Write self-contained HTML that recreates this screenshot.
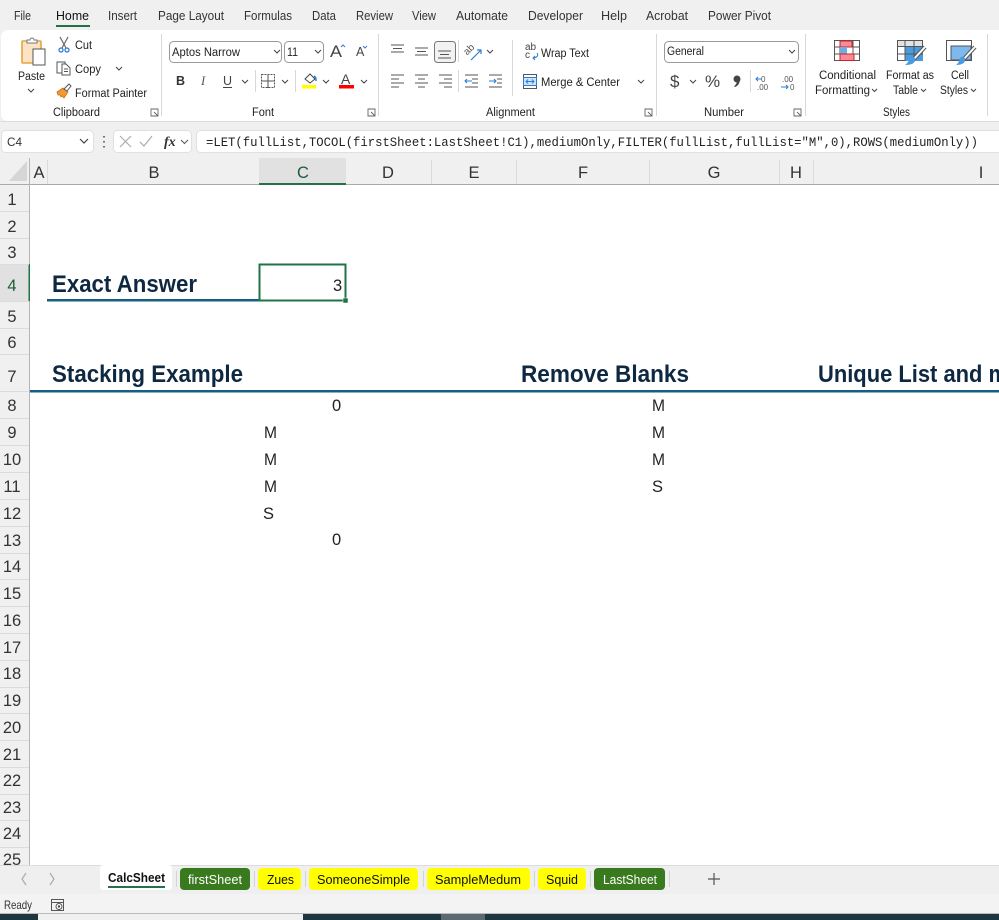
<!DOCTYPE html>
<html><head><meta charset="utf-8"><style>
html,body{margin:0;padding:0;background:#fff;overflow:hidden}
svg{display:block}
text{font-family:"Liberation Sans",sans-serif;fill:#222;font-size:11.5px}
.t{font-size:12.5px;fill:#333}
.h{font-size:16.5px;fill:#333;text-anchor:middle}
.r{font-size:16.5px;fill:#333;text-anchor:middle}
.g{font-size:16.5px;fill:#222}
.b{font-size:24px;font-weight:bold;fill:#0e2841}
.tab{font-size:13px;fill:#111}
.l{fill:none;stroke:#555;stroke-width:1}
.c{fill:none;stroke:#444;stroke-width:1}
</style></head><body>
<svg width="999" height="920" viewBox="0 0 999 920" xmlns="http://www.w3.org/2000/svg">
<rect width="999" height="920" fill="#fff"/>
<rect width="999" height="185" fill="#f0f0f0"/>
<!-- menu -->
<text class="t" x="14" y="20" textLength="17" lengthAdjust="spacingAndGlyphs">File</text>
<text class="t" x="56" y="20" textLength="33" lengthAdjust="spacingAndGlyphs" style="fill:#111">Home</text>
<rect x="56" y="25" width="34" height="2" fill="#217346"/>
<text class="t" x="108" y="20" textLength="29" lengthAdjust="spacingAndGlyphs">Insert</text>
<text class="t" x="158" y="20" textLength="66" lengthAdjust="spacingAndGlyphs">Page Layout</text>
<text class="t" x="244" y="20" textLength="48" lengthAdjust="spacingAndGlyphs">Formulas</text>
<text class="t" x="312" y="20" textLength="24" lengthAdjust="spacingAndGlyphs">Data</text>
<text class="t" x="356" y="20" textLength="37" lengthAdjust="spacingAndGlyphs">Review</text>
<text class="t" x="412" y="20" textLength="24" lengthAdjust="spacingAndGlyphs">View</text>
<text class="t" x="456" y="20" textLength="52" lengthAdjust="spacingAndGlyphs">Automate</text>
<text class="t" x="528" y="20" textLength="55" lengthAdjust="spacingAndGlyphs">Developer</text>
<text class="t" x="601" y="20" textLength="26" lengthAdjust="spacingAndGlyphs">Help</text>
<text class="t" x="646" y="20" textLength="42" lengthAdjust="spacingAndGlyphs">Acrobat</text>
<text class="t" x="708" y="20" textLength="63" lengthAdjust="spacingAndGlyphs">Power Pivot</text>
<!-- ribbon -->
<rect x="1" y="30" width="1010" height="91" rx="7" fill="#fff"/>
<rect x="0" y="121" width="999" height="1" fill="#dcdcdc"/>
<g fill="#d8d8d8">
<rect x="161" y="34" width="1" height="82"/><rect x="378" y="34" width="1" height="82"/>
<rect x="656" y="34" width="1" height="82"/><rect x="805" y="34" width="1" height="82"/>
<rect x="987" y="34" width="1" height="82"/><rect x="512" y="40" width="1" height="56"/>
<rect x="255" y="70" width="1" height="22"/><rect x="295" y="70" width="1" height="22"/>
<rect x="458" y="40" width="1" height="22"/><rect x="458" y="70" width="1" height="22"/>
<rect x="750" y="70" width="1" height="22"/>
</g>
<!-- paste -->
<rect x="22" y="41" width="19" height="22" rx="1" fill="#fbe3c4" stroke="#e8a33d" stroke-width="1.6"/>
<path d="M27 43v-3h3a2 2 0 0 1 4 0h3v3z" fill="#fff" stroke="#777"/>
<rect x="33" y="49" width="12" height="16" fill="#fff" stroke="#555"/>
<text x="18" y="80" textLength="27" lengthAdjust="spacingAndGlyphs">Paste</text>
<path class="c" d="M28 89l3 3 3-3"/>
<!-- cut -->
<path d="M60 37l6 11M68 37l-6 11" stroke="#666" fill="none" stroke-width="1.2"/>
<circle cx="61" cy="50" r="2" fill="none" stroke="#2b7cd3" stroke-width="1.3"/><circle cx="67" cy="50" r="2" fill="none" stroke="#2b7cd3" stroke-width="1.3"/>
<text x="75" y="49" textLength="17" lengthAdjust="spacingAndGlyphs">Cut</text>
<!-- copy -->
<rect x="57" y="62" width="8" height="11" fill="#fff" stroke="#555"/>
<path d="M62 64h4l4 4v7h-8z" fill="#fff" stroke="#555"/><path d="M64 69h4M64 71.500h4" stroke="#555"/>
<text x="75" y="73" textLength="26" lengthAdjust="spacingAndGlyphs">Copy</text>
<path class="c" d="M116 67l3 3 3-3"/>
<!-- painter -->
<path d="M57 92l6-4 5 4-4 6-2-2-1 1-1-2-2 0z" fill="#f09a37" stroke="#c96f10" stroke-width=".8"/>
<path d="M64 89l5-5 2 2-4 5z" fill="#fff" stroke="#555"/>
<text x="75" y="97" textLength="72" lengthAdjust="spacingAndGlyphs">Format Painter</text>
<text x="53" y="116" textLength="47" lengthAdjust="spacingAndGlyphs" style="font-size:11.500px">Clipboard</text>
<path d="M151 109h7v7h-7zM154 112l4 4" fill="none" stroke="#666" stroke-width=".9"/>
<!-- font -->
<rect x="169.500" y="41.500" width="112" height="21" rx="4" fill="#fff" stroke="#999"/>
<text x="172" y="56" textLength="68" lengthAdjust="spacingAndGlyphs">Aptos Narrow</text>
<path class="c" d="M274 50l3 3 3-3"/>
<rect x="284.500" y="41.500" width="39" height="21" rx="4" fill="#fff" stroke="#999"/>
<text x="287" y="56" textLength="11" lengthAdjust="spacingAndGlyphs">11</text>
<path class="c" d="M315 50l3 3 3-3"/>
<text x="330" y="57" textLength="12" lengthAdjust="spacingAndGlyphs" style="font-size:16.500px;fill:#444">A</text><path d="M341 47l2-2 2 2" fill="none" stroke="#2b7cd3"/>
<text x="356" y="56" style="font-size:12.500px;fill:#444">A</text><path d="M363 46l2 2 2-2" fill="none" stroke="#2b7cd3"/>
<text x="176" y="85" style="font-size:12.500px;font-weight:bold;fill:#333">B</text>
<text x="201" y="85" style="font-size:12.500px;font-style:italic;font-family:'Liberation Serif',serif;fill:#555">I</text>
<text x="223" y="85" style="font-size:12.500px;fill:#444">U</text><rect x="223" y="87" width="9" height="1" fill="#444"/>
<path class="c" d="M242 80l3 3 3-3M282 80l3 3 3-3M323 80l3 3 3-3M361 80l3 3 3-3"/>
<rect x="261.500" y="74.500" width="13" height="13" fill="none" stroke="#555" stroke-dasharray="2 1"/><path d="M268 74v14M261 81h14" stroke="#555"/>
<path d="M305 79l5-5 5 5-5 4z" fill="#fff" stroke="#444"/><path d="M314 76c2 1 2 3 2 5" stroke="#2b7cd3" fill="none" stroke-width="1.500"/>
<rect x="302" y="85" width="14" height="3.500" fill="#ffff00"/>
<text x="341" y="84" style="font-size:14px;fill:#444">A</text>
<rect x="339" y="85" width="15" height="3.500" fill="#f00"/>
<text x="252" y="116" textLength="22" lengthAdjust="spacingAndGlyphs" style="font-size:11.500px">Font</text>
<path d="M368 109h7v7h-7zM371 112l4 4" fill="none" stroke="#666" stroke-width=".9"/>
<!-- alignment -->
<rect x="434.500" y="41.500" width="21" height="21" rx="3" fill="#f2f2f2" stroke="#777"/>
<path class="l" d="M391 45h13M393 48.500h9M391 52h13M415 48h13M417 51.500h9M415 55h13M438 51h13M440 54.500h9M438 58h13"/>
<path class="l" d="M391 75h13M391 79h8M391 83h13M391 87h8M415 75h13M418 79h7M415 83h13M418 87h7M439 75h13M444 79h8M439 83h13M444 87h8"/>
<path d="M472 81h-7m2-2l-2 2 2 2" stroke="#2b7cd3" fill="none"/><path class="l" d="M465 75h13M472 79h6M472 83h6M465 87h13"/>
<path d="M489 81h7m-2-2l2 2-2 2" stroke="#2b7cd3" fill="none"/><path class="l" d="M489 75h13M497 79h5M497 83h5M489 87h13"/>
<text x="464" y="52" transform="rotate(-45 470 50)" style="font-size:10px;fill:#555">ab</text>
<path d="M471 60l10-10m-4 0h4v4" stroke="#2b7cd3" fill="none" stroke-width="1.200"/>
<path class="c" d="M487 50l3 3 3-3M638 80l3 3 3-3"/>
<text x="525" y="50" style="font-size:10px;fill:#444">ab</text><text x="525" y="58" style="font-size:10px;fill:#444">c</text>
<path d="M537 53c2 3-1 5-4 5m2-2l-2 2 2 2" stroke="#2b7cd3" fill="none"/>
<text x="541" y="57" textLength="48" lengthAdjust="spacingAndGlyphs">Wrap Text</text>
<rect x="523.500" y="74.500" width="13" height="14" fill="#fff" stroke="#555"/><rect x="523.500" y="77.500" width="13" height="8" fill="#cfe4f7" stroke="#2b7cd3"/>
<path d="M526 81.500h8m-6-2l-2 2 2 2m4-4l2 2-2 2" stroke="#2b7cd3" fill="none" stroke-width=".9"/>
<text x="541" y="86" textLength="79" lengthAdjust="spacingAndGlyphs">Merge &amp; Center</text>
<text x="486" y="116" textLength="49" lengthAdjust="spacingAndGlyphs" style="font-size:11.500px">Alignment</text>
<path d="M645 109h7v7h-7zM648 112l4 4" fill="none" stroke="#666" stroke-width=".9"/>
<!-- number -->
<rect x="664.500" y="41.500" width="134" height="21" rx="4" fill="#fff" stroke="#999"/>
<text x="667" y="55" textLength="37" lengthAdjust="spacingAndGlyphs">General</text>
<path class="c" d="M789 50l3 3 3-3M690 80l3 3 3-3"/>
<text x="670" y="87" style="font-size:17px;fill:#444">$</text>
<text x="705" y="87" style="font-size:17px;fill:#444">%</text>
<circle cx="737" cy="79" r="3.500" fill="#444"/><path d="M740 79c0 4-2 7-5 8l-1-1c2-1 3-3 3-6z" fill="#444"/>
<text x="761" y="82" style="font-size:8px;fill:#555">0</text><text x="757" y="90" style="font-size:8px;fill:#555">.00</text>
<path d="M762 79h-6m2-2l-2 2 2 2" stroke="#2b7cd3" fill="none"/>
<text x="782" y="82" style="font-size:8px;fill:#555">.00</text><text x="790" y="90" style="font-size:8px;fill:#555">0</text>
<path d="M781 87h7m-2-2l2 2-2 2" stroke="#2b7cd3" fill="none"/>
<text x="704" y="116" textLength="40" lengthAdjust="spacingAndGlyphs" style="font-size:11.500px">Number</text>
<path d="M794 109h7v7h-7zM797 112l4 4" fill="none" stroke="#666" stroke-width=".9"/>
<!-- styles -->
<rect x="834.500" y="40.500" width="25" height="20" fill="#fff" stroke="#555"/>
<path d="M840 41v20M853 41v20M834 47h25M834 54h25" stroke="#555"/>
<rect x="840" y="41" width="12" height="6" fill="#f78b98" stroke="#c22"/>
<rect x="840" y="47" width="7" height="7" fill="#6caee6"/>
<rect x="840" y="54" width="14" height="6.500" fill="#f78b98" stroke="#c22"/>
<text x="819" y="79" textLength="57" lengthAdjust="spacingAndGlyphs">Conditional</text>
<text x="815" y="94" textLength="55" lengthAdjust="spacingAndGlyphs">Formatting</text>
<path class="c" d="M872 89l2.500 2.500 2.500-2.500"/>
<rect x="897.500" y="40.500" width="25" height="20" fill="#fff" stroke="#555"/>
<rect x="897.500" y="40.500" width="25" height="6" fill="#e3e3e3" stroke="#555"/>
<rect x="905" y="47" width="18" height="14" fill="#4a9ae0"/>
<path d="M905 41v20M914 41v20M897 54h26" stroke="#555"/>
<path d="M925 47l-12 13" stroke="#555" stroke-width="4"/><path d="M925 47l-12 13" stroke="#fff" stroke-width="2"/>
<path d="M911 57c3-1 5 1 4 4-1 3-5 4-10 4 3-2 4-5 6-8z" fill="#4a9ae0"/>
<text x="886" y="79" textLength="48" lengthAdjust="spacingAndGlyphs">Format as</text>
<text x="893" y="94" textLength="25" lengthAdjust="spacingAndGlyphs">Table</text>
<path class="c" d="M921 89l2.500 2.500 2.500-2.500"/>
<rect x="946.500" y="40.500" width="25" height="20" fill="#fff" stroke="#555"/>
<rect x="951" y="46" width="20" height="14" fill="#7db8ee" stroke="#555"/>
<path d="M975 47l-12 13" stroke="#555" stroke-width="4"/><path d="M975 47l-12 13" stroke="#fff" stroke-width="2"/>
<path d="M961 57c3-1 5 1 4 4-1 3-5 4-9 4 3-2 3-5 5-8z" fill="#4a9ae0"/>
<text x="951" y="79" textLength="18" lengthAdjust="spacingAndGlyphs">Cell</text>
<text x="940" y="94" textLength="28" lengthAdjust="spacingAndGlyphs">Styles</text>
<path class="c" d="M971 89l2.500 2.500 2.500-2.500"/>
<text x="883" y="116" textLength="27" lengthAdjust="spacingAndGlyphs" style="font-size:11.500px">Styles</text>
<!-- formula bar -->
<rect x="1.500" y="130.500" width="92" height="22" rx="4" fill="#fff" stroke="#e0e0e0"/>
<text x="7" y="146" textLength="15" lengthAdjust="spacingAndGlyphs" style="fill:#333">C4</text>
<path d="M80 139l4 4 4-4" fill="none" stroke="#444" stroke-width="1.200"/>
<path d="M104 136v1.500M104 141v1.500M104 146v1.500" stroke="#444" stroke-width="1.500"/>
<rect x="113.500" y="130.500" width="78" height="22" rx="4" fill="#fff" stroke="#e0e0e0"/>
<path d="M120 136l11 11M131 136l-11 11M140 142l4 4 8-10" fill="none" stroke="#a8a8a8" stroke-width="1.100"/>
<text x="164" y="146" style="font-family:'Liberation Serif',serif;font-style:italic;font-weight:bold;font-size:14px;fill:#333">fx</text>
<path d="M181 140l3.500 3.500 3.500-3.500" fill="none" stroke="#555"/>
<rect x="196.500" y="130.500" width="810" height="22" rx="4" fill="#fff" stroke="#e0e0e0"/>
<text x="206" y="146" textLength="772" lengthAdjust="spacingAndGlyphs" style="font-family:'Liberation Mono',monospace;font-size:12.500px;fill:#222">=LET(fullList,TOCOL(firstSheet:LastSheet!C1),mediumOnly,FILTER(fullList,fullList="M",0),ROWS(mediumOnly))</text>
<!-- col headers -->
<rect x="0" y="158" width="999" height="27" fill="#f0f0f0"/>
<path d="M27 160v20H9z" fill="#d6d6d6" transform="translate(0 1)"/>
<rect x="259" y="158" width="87" height="26" fill="#e1e1e1"/>
<rect x="0" y="184" width="999" height="1" fill="#aaa"/>
<rect x="259" y="183" width="87" height="2" fill="#217346"/>
<g fill="#dadada"><rect x="47" y="160" width="1" height="24"/><rect x="431" y="160" width="1" height="24"/><rect x="516" y="160" width="1" height="24"/><rect x="649" y="160" width="1" height="24"/><rect x="779" y="160" width="1" height="24"/><rect x="813" y="160" width="1" height="24"/></g>
<text class="h" x="39" y="178">A</text><text class="h" x="154" y="178">B</text><text class="h" x="303" y="178" style="fill:#1c5c38">C</text><text class="h" x="388" y="178">D</text><text class="h" x="474" y="178">E</text><text class="h" x="583" y="178">F</text><text class="h" x="714" y="178">G</text><text class="h" x="796" y="178">H</text><text class="h" x="981" y="178">I</text>
<!-- row headers -->
<rect x="0" y="185" width="30" height="680" fill="#f0f0f0"/>
<rect x="29" y="158" width="1" height="707" fill="#b5b5b5"/>
<rect x="0" y="264" width="29" height="37" fill="#e1e1e1"/><rect x="28.500" y="264" width="1.500" height="37" fill="#217346"/>
<g fill="#dcdcdc"><rect y="211" width="29" height="1"/><rect y="238" width="29" height="1"/><rect y="264" width="29" height="1"/><rect y="301" width="29" height="1"/><rect y="328" width="29" height="1"/><rect y="354" width="29" height="1"/><rect y="391" width="29" height="1"/><rect y="418" width="29" height="1"/><rect y="445" width="29" height="1"/><rect y="472" width="29" height="1"/><rect y="499" width="29" height="1"/><rect y="526" width="29" height="1"/><rect y="553" width="29" height="1"/><rect y="579" width="29" height="1"/><rect y="606" width="29" height="1"/><rect y="633" width="29" height="1"/><rect y="660" width="29" height="1"/><rect y="687" width="29" height="1"/><rect y="713" width="29" height="1"/><rect y="740" width="29" height="1"/><rect y="767" width="29" height="1"/><rect y="794" width="29" height="1"/><rect y="820" width="29" height="1"/><rect y="847" width="29" height="1"/></g>
<text class="r" x="12" y="205">1</text><text class="r" x="12" y="232">2</text><text class="r" x="12" y="258">3</text><text class="r" x="12" y="291" style="fill:#1c5c38">4</text><text class="r" x="12" y="322">5</text><text class="r" x="12" y="348">6</text><text class="r" x="12" y="382">7</text><text class="r" x="12" y="411">8</text><text class="r" x="12" y="438">9</text>
<text class="r" x="12" y="465">10</text><text class="r" x="12" y="492">11</text><text class="r" x="12" y="519">12</text><text class="r" x="12" y="546">13</text><text class="r" x="12" y="572">14</text><text class="r" x="12" y="599">15</text><text class="r" x="12" y="626">16</text><text class="r" x="12" y="653">17</text><text class="r" x="12" y="679">18</text><text class="r" x="12" y="706">19</text><text class="r" x="12" y="733">20</text><text class="r" x="12" y="760">21</text><text class="r" x="12" y="786">22</text><text class="r" x="12" y="813">23</text><text class="r" x="12" y="839">24</text><text class="r" x="12" y="865">25</text>
<!-- cells -->
<text class="b" x="52" y="292" textLength="145" lengthAdjust="spacingAndGlyphs">Exact Answer</text>
<text class="b" x="52" y="382" textLength="191" lengthAdjust="spacingAndGlyphs">Stacking Example</text>
<text class="b" x="521" y="382" textLength="168" lengthAdjust="spacingAndGlyphs">Remove Blanks</text>
<text class="b" x="818" y="382" textLength="190" lengthAdjust="spacingAndGlyphs">Unique List and m</text>
<rect x="47" y="299" width="212" height="2.500" fill="#156082"/>
<rect x="30" y="390" width="969" height="2.500" fill="#156082"/>
<rect x="259.500" y="264.500" width="86" height="36" fill="#fff" stroke="#217346" stroke-width="2"/>
<rect x="343" y="298" width="5" height="5" fill="#217346" stroke="#fff" stroke-width=".5"/>
<text class="g" x="333" y="291">3</text>
<text class="g" x="332" y="411">0</text><text class="g" x="332" y="545">0</text>
<text class="g" x="264" y="438" textLength="13" lengthAdjust="spacingAndGlyphs">M</text><text class="g" x="264" y="465" textLength="13" lengthAdjust="spacingAndGlyphs">M</text><text class="g" x="264" y="492" textLength="13" lengthAdjust="spacingAndGlyphs">M</text><text class="g" x="263" y="519">S</text>
<text class="g" x="652" y="411" textLength="13" lengthAdjust="spacingAndGlyphs">M</text><text class="g" x="652" y="438" textLength="13" lengthAdjust="spacingAndGlyphs">M</text><text class="g" x="652" y="465" textLength="13" lengthAdjust="spacingAndGlyphs">M</text><text class="g" x="652" y="492">S</text>
<!-- tabs -->
<rect x="0" y="865" width="999" height="29" fill="#efefef"/>
<rect x="0" y="865" width="999" height="1" fill="#dcdcdc"/>
<path d="M26 873l-4 6 4 6M50 873l4 6-4 6" fill="none" stroke="#aaa" stroke-width="1.200"/>
<rect x="100" y="865" width="72" height="25" rx="3" fill="#fff"/>
<text class="tab" x="108" y="882" textLength="57" lengthAdjust="spacingAndGlyphs" style="font-weight:bold">CalcSheet</text>
<rect x="108" y="886" width="57" height="2" fill="#217346"/>
<g fill="#d4d4d4"><rect x="176" y="871" width="1" height="16"/><rect x="254" y="871" width="1" height="16"/><rect x="305" y="871" width="1" height="16"/><rect x="423" y="871" width="1" height="16"/><rect x="534" y="871" width="1" height="16"/><rect x="590" y="871" width="1" height="16"/><rect x="669" y="871" width="1" height="16"/></g>
<rect x="180" y="868" width="70" height="22" rx="4" fill="#3a7a1f"/>
<text class="tab" x="188" y="884" textLength="54" lengthAdjust="spacingAndGlyphs" style="fill:#fff">firstSheet</text>
<rect x="258" y="868" width="43" height="22" rx="4" fill="#ff0"/>
<text class="tab" x="267" y="884" textLength="27" lengthAdjust="spacingAndGlyphs">Zues</text>
<rect x="309" y="868" width="109" height="22" rx="4" fill="#ff0"/>
<text class="tab" x="317" y="884" textLength="93" lengthAdjust="spacingAndGlyphs">SomeoneSimple</text>
<rect x="427" y="868" width="103" height="22" rx="4" fill="#ff0"/>
<text class="tab" x="435" y="884" textLength="86" lengthAdjust="spacingAndGlyphs">SampleMedum</text>
<rect x="538" y="868" width="48" height="22" rx="4" fill="#ff0"/>
<text class="tab" x="546" y="884" textLength="32" lengthAdjust="spacingAndGlyphs">Squid</text>
<rect x="594" y="868" width="71" height="22" rx="4" fill="#3a7a1f"/>
<text class="tab" x="603" y="884" textLength="54" lengthAdjust="spacingAndGlyphs" style="fill:#fff">LastSheet</text>
<path d="M708 879h12M714 873v12" stroke="#555" stroke-width="1.200"/>
<!-- status -->
<rect x="0" y="894" width="999" height="20" fill="#f3f3f3"/>
<text x="4" y="909" textLength="28" lengthAdjust="spacingAndGlyphs" style="font-size:12px;fill:#333">Ready</text>
<rect x="51.500" y="899.500" width="12" height="11" fill="none" stroke="#555"/><path d="M51 902.500h13" stroke="#555"/><circle cx="59" cy="906.500" r="3" fill="#fff" stroke="#555"/><circle cx="59" cy="906.500" r="1.200" fill="#444"/>
<rect x="0" y="913" width="999" height="1" fill="#bbb"/>
<rect x="0" y="914" width="999" height="6" fill="#1f3540"/>
<rect x="38" y="914" width="265" height="6" fill="#f0f0f0"/>
<rect x="441" y="914" width="44" height="6" fill="#5b6a72"/>
</svg>
</body></html>
